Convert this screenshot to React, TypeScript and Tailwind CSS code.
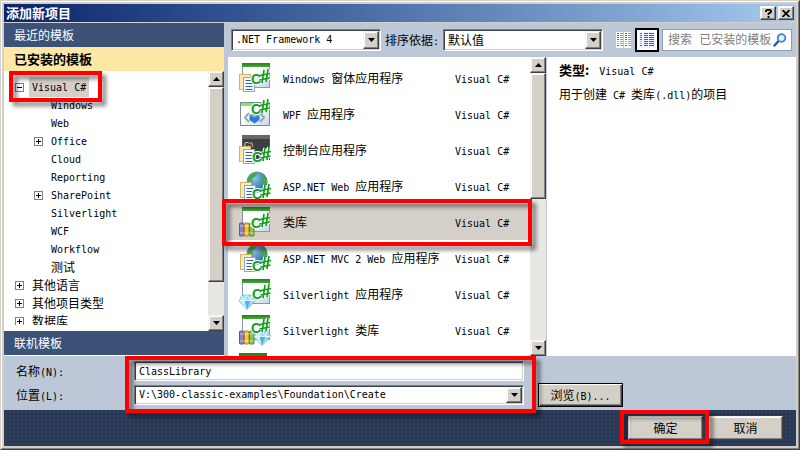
import React from "react";

const CJK = "font-['Noto_Sans_CJK_SC',sans-serif]";
const MONO = "font-['DejaVu_Sans_Mono','Noto_Sans_CJK_SC',monospace]";
const RAISED =
  "border border-t-[#f4f2ee] border-l-[#f4f2ee] border-r-[#404040] border-b-[#404040] bg-[#d4d0c8] shadow-[inset_-1px_-1px_0_#808080,inset_1px_1px_0_#ffffff]";
const SUNKEN =
  "border border-t-[#808080] border-l-[#808080] border-r-white border-b-white shadow-[inset_1px_1px_0_#404040,inset_-1px_-1px_0_#d4d0c8] bg-white";

/* Latin runs are set in the monospaced face, Chinese runs in the CJK face. */
function T({ children }: { children: string }) {
  return (
    <>
      {children.split(/([\x20-\x7e]+)/).map((run, i) =>
        i % 2 ? (
          <span key={i} className={`${MONO} whitespace-pre text-[10px]`}>
            {run}
          </span>
        ) : (
          run
        ),
      )}
    </>
  );
}

function Arrow({ up = false }: { up?: boolean }) {
  return (
    <svg width="7" height="4" viewBox="0 0 7 4" aria-hidden="true">
      <path d={up ? "M0 4 3.5 0 7 4Z" : "M0 0H7L3.5 4Z"} fill="#000" />
    </svg>
  );
}

function Scrollbar({ thumb, label }: { thumb: string; label: string }) {
  return (
    <div className="flex w-4 shrink-0 flex-col bg-[#e9e7e3]">
      <button aria-label={`${label} ↑`} className={`flex h-4 shrink-0 items-center justify-center ${RAISED}`}>
        <Arrow up />
      </button>
      <div className={`${thumb} ${RAISED}`} />
      <button aria-label={`${label} ↓`} className={`mt-auto flex h-4 shrink-0 items-center justify-center ${RAISED}`}>
        <Arrow />
      </button>
    </div>
  );
}

function Combo({ id, options, className, textClass, label }: { id: string; options: string[]; className: string; textClass: string; label?: string }) {
  return (
    <div className={`relative ${className}`}>
      <select id={id} aria-label={label} className={`h-full w-full appearance-none rounded-none pr-5 pl-1 outline-none ${textClass} ${SUNKEN}`}>
        {options.map((o) => (
          <option key={o}>{o}</option>
        ))}
      </select>
      <span className={`pointer-events-none absolute inset-y-0.5 right-0.5 flex w-4 items-center justify-center ${RAISED}`}>
        <Arrow />
      </span>
    </div>
  );
}

type Node = { text: string; level: 1 | 2; sign?: "+" | "-"; selected?: boolean };
const TREE: Node[] = [
  { text: "Visual C#", level: 1, sign: "-", selected: true },
  { text: "Windows", level: 2 },
  { text: "Web", level: 2 },
  { text: "Office", level: 2, sign: "+" },
  { text: "Cloud", level: 2 },
  { text: "Reporting", level: 2 },
  { text: "SharePoint", level: 2, sign: "+" },
  { text: "Silverlight", level: 2 },
  { text: "WCF", level: 2 },
  { text: "Workflow", level: 2 },
  { text: "测试", level: 2 },
  { text: "其他语言", level: 1, sign: "+" },
  { text: "其他项目类型", level: 1, sign: "+" },
  { text: "数据库", level: 1, sign: "+" },
];

function Expander({ sign }: { sign?: "+" | "-" }) {
  return (
    <svg width="9" height="9" viewBox="0 0 9 9" className="shrink-0" shapeRendering="crispEdges" aria-hidden="true">
      {sign && (
        <>
          <rect x=".5" y=".5" width="8" height="8" fill="#fff" stroke="#808080" />
          <path d={sign === "+" ? "M2 4.5H7M4.5 2V7" : "M2 4.5H7"} stroke="#000" />
        </>
      )}
    </svg>
  );
}

type Kind = "form" | "wpf" | "console" | "web" | "lib" | "sl" | "sllib" | "green";

function Sharp({ x, y }: { x: number; y: number }) {
  const bars = "M12 -1 10 12M16 -2 14 11M8 4.500 18 2.500M7.500 9 17.500 7";
  return (
    <g transform={`translate(${x} ${y})`}>
      <path d={bars} stroke="#fff" strokeWidth="3.800" />
      <text
        x="-1"
        y="13"
        fontSize="14"
        fontWeight="bold"
        fontFamily="Liberation Sans, sans-serif"
        fill="#12a018"
        stroke="#fff"
        strokeWidth="2"
        paintOrder="stroke"
      >
        C
      </text>
      <path d={bars} stroke="#12a018" strokeWidth="1.700" />
    </g>
  );
}

function Papers() {
  return (
    <g>
      <rect x=".5" y="12.500" width="11" height="15" fill="#fbe9b0" stroke="#d2b469" />
      <rect x="4.500" y="15.500" width="11" height="14" fill="#f6faff" stroke="#8da6cc" />
      <path d="M6.500 18.500H13.500M6.500 21.500H13.500M6.500 24.500H13.500M6.500 27.500H13.500" stroke="#2f60b8" />
    </g>
  );
}

function Books() {
  return (
    <g>
      <rect x=".5" y="17" width="4.500" height="13" rx="1" fill="#8d83bd" stroke="#62588f" />
      <rect x="5.500" y="17" width="4.500" height="13" rx="1" fill="#f0c64a" stroke="#a97c18" />
      <rect x="10.500" y="17" width="4.500" height="13" rx="1" fill="#8dc053" stroke="#4f842a" />
      <path d="M1 20H14.500M1 27H14.500" stroke="#fff" strokeOpacity=".5" />
    </g>
  );
}

function Gem({ x, y }: { x: number; y: number }) {
  return (
    <g transform={`translate(${x} ${y})`}>
      <path d="M3 1H13L17 6 8 15.500 0 7Z" fill="#9bdcf5" stroke="#6fb9dc" strokeWidth=".8" />
      <path d="M3 1 5.500 6 8 15.500 1 7Z" fill="#cdf0fc" />
      <path d="M5.500 6H11.500L8 15.500Z" fill="#4fb4df" />
      <path d="M.5 6.500H16.500M5.500 6 7.500 1 11.500 6 13 1" stroke="#fff" strokeWidth=".8" fill="none" />
    </g>
  );
}

function Frame({ dark = false }: { dark?: boolean }) {
  return (
    <g>
      <rect x="3.500" y="1.500" width="27" height="24" fill={dark ? "#3c3f42" : "url(#paper)"} stroke={dark ? "#55585b" : "#8798a8"} />
      <rect x="3" y="1" width="28" height="4" fill={dark ? "#65686a" : "url(#bar)"} />
    </g>
  );
}

function TemplateIcon({ kind }: { kind: Kind }) {
  return (
    <svg width="32" height="32" viewBox="0 0 32 32" fill="none" className="shrink-0" aria-hidden="true">
      <defs>
        <linearGradient id="bar" x1="0" y1="0" x2="0" y2="1">
          <stop offset="0" stopColor="#23801d" />
          <stop offset="1" stopColor="#47a838" />
        </linearGradient>
        <linearGradient id="paper" x1="0" y1="0" x2="1" y2="1">
          <stop offset=".4" stopColor="#ffffff" />
          <stop offset="1" stopColor="#c3d4ea" />
        </linearGradient>
        <radialGradient id="globe" cx=".35" cy=".3" r=".8">
          <stop offset="0" stopColor="#8fc8f2" />
          <stop offset="1" stopColor="#1b57a8" />
        </radialGradient>
      </defs>
      {kind === "form" && (
        <>
          <Frame />
          <Papers />
          <Sharp x={13} y={9} />
        </>
      )}
      {kind === "wpf" && (
        <>
          <rect x="1.500" y="4.500" width="29" height="23" fill="url(#paper)" stroke="#7d8a98" />
          <rect x="2" y="5" width="28" height="3" fill="#7cf052" />
          <path d="M10 15 6 19.500 10 24M21 15 25 19.500 21 24" stroke="#9aa5b3" strokeWidth="2" />
          <path d="M10.500 17 15.500 15 20.500 17V22L15.500 25.500 10.500 22Z" fill="#2f7bd3" />
          <path d="M10.500 17 15.500 15 20.500 17 15.500 19.500Z" fill="#77b8f2" />
          <Sharp x={13} y={3} />
        </>
      )}
      {kind === "console" && (
        <>
          <Frame dark />
          <text x="5" y="13" fontSize="7" fontFamily="Liberation Sans, sans-serif" fill="#fff">
            C:\
          </text>
          <Papers />
          <Sharp x={14} y={15} />
        </>
      )}
      {kind === "web" && (
        <>
          <circle cx="18" cy="12" r="10.500" fill="url(#globe)" />
          <path d="M10 6C13 3 15 2 19 2L17 6 13 9 14 14 10 13 8 10ZM21 3 27 8 28.500 13 24 16 21 11 23 8ZM15 16 19 18 18 22 14 20Z" fill="#49a851" />
          <g transform="translate(1 0)">
            <Papers />
          </g>
          <Sharp x={14} y={16} />
        </>
      )}
      {kind === "lib" && (
        <>
          <Frame />
          <Books />
          <Sharp x={13} y={9} />
        </>
      )}
      {kind === "sl" && (
        <>
          <Frame />
          <Gem x={0} y={16} />
          <Sharp x={14} y={8} />
        </>
      )}
      {kind === "sllib" && (
        <>
          <Frame />
          <Books />
          <Gem x={15} y={16} />
          <Sharp x={13} y={6} />
        </>
      )}
      {kind === "green" && <rect x="0" y="3" width="28" height="16" fill="url(#bar)" />}
    </svg>
  );
}

const TEMPLATES: { name: string; kind: Kind; selected?: boolean }[] = [
  { name: "Windows 窗体应用程序", kind: "form" },
  { name: "WPF 应用程序", kind: "wpf" },
  { name: "控制台应用程序", kind: "console" },
  { name: "ASP.NET Web 应用程序", kind: "web" },
  { name: "类库", kind: "lib", selected: true },
  { name: "ASP.NET MVC 2 Web 应用程序", kind: "web" },
  { name: "Silverlight 应用程序", kind: "sl" },
  { name: "Silverlight 类库", kind: "sllib" },
];

const DASHES = ["#2f9e4a", "#ff2a1a", "#3a62e4", "#ff2a1a", "#c8d820", "#f0b429", "#ff2a1a"];

function SmallIconsView() {
  return (
    <svg width="15" height="16" viewBox="0 0 15 16" aria-hidden="true" shapeRendering="crispEdges">
      <rect width="7" height="16" fill="#ffffff" />
      <rect x="8" width="7" height="16" fill="#ffffff" />
      {DASHES.map((c, i) => (
        <g key={i}>
          <rect x="1" y={1 + i * 2} width="2" height="1" fill={c} />
          <rect x="4" y={1 + i * 2} width="3" height="1" fill="#8fa0bd" />
          <rect x="9" y={1 + i * 2} width="2" height="1" fill={c} />
          <rect x="12" y={1 + i * 2} width="3" height="1" fill="#8fa0bd" />
        </g>
      ))}
    </svg>
  );
}

function MediumIconsView() {
  return (
    <svg width="16" height="16" viewBox="0 0 16 16" aria-hidden="true" shapeRendering="crispEdges">
      <rect width="16" height="16" fill="#eef3ff" />
      {DASHES.map((c, i) => (
        <g key={i}>
          <rect x="1" y={1 + i * 2} width="2" height="1" fill={c} />
          <rect x="5" y={1 + i * 2} width="4" height="1" fill="#2f55e6" />
          <rect x="10" y={1 + i * 2} width="5" height="1" fill="#2f55e6" />
        </g>
      ))}
    </svg>
  );
}

function Highlight({ className }: { className: string }) {
  return (
    <div
      aria-hidden="true"
      className={`pointer-events-none absolute z-10 border-4 border-[#ff0000] drop-shadow-[4px_4px_2px_rgba(0,0,0,0.5)] ${className}`}
    />
  );
}

export default function App() {
  return (
    <div className={`relative h-screen w-full overflow-hidden border border-t-[#d4d0c8] border-r-[#404040] border-b-[#404040] border-l-[#d4d0c8] text-xs text-black ${CJK}`}>
      <div className="flex h-full flex-col border border-t-white border-r-[#808080] border-b-[#808080] border-l-white">
        <div className="flex min-h-0 flex-1 flex-col border-2 border-[#d4d0c8]">
          <header className="flex h-[19px] shrink-0 items-center gap-0.5 border-b border-[#d4d0c8] bg-linear-to-r from-[#0a246a] to-[#a6caf0] pr-0.5 pl-0.5">
            <h1 className="flex-1 text-[13px] leading-4 font-bold text-white">添加新项目</h1>
            <button aria-label="帮助" className={`flex h-3.5 w-4 items-center justify-center ${RAISED}`}>
              <svg width="7" height="9" viewBox="0 0 7 9" fill="none" aria-hidden="true">
                <path d="M1 3V1.800L2 .9H5L6 1.800V3L3.500 4.800V6M3.500 7V9" stroke="#000" strokeWidth="1.800" />
              </svg>
            </button>
            <button aria-label="关闭" className={`flex h-3.5 w-4 items-center justify-center ${RAISED}`}>
              <svg width="8" height="7" viewBox="0 0 8 7" fill="none" aria-hidden="true">
                <path d="M.5 0 7.500 7M7.500 0 .5 7" stroke="#000" strokeWidth="1.700" />
              </svg>
            </button>
          </header>

          <main className="flex min-h-0 flex-1 bg-[#bcc7d8]">
            <nav className="mr-1 flex w-[220px] shrink-0 flex-col border-b border-white bg-white">
              <button className="flex h-6 shrink-0 items-center bg-[#3d5277] pl-2.5 text-white">最近的模板</button>
              <h2 className="flex h-6 shrink-0 items-center bg-[#ffe8a6] pl-2.5 text-[13px] font-bold">已安装的模板</h2>
              <div className="flex min-h-0 flex-1">
                <ul className="mb-1.5 min-w-0 flex-1 overflow-hidden pt-[7px]">
                  {TREE.map((n) => (
                    <li key={n.text} className={`flex h-[18px] items-center gap-[5px] leading-[18px] ${n.level === 1 ? "pl-[11px]" : "pl-[30px]"}`}>
                      <Expander sign={n.sign} />
                      <span className={`px-[3px] ${n.selected ? "bg-[#d4d0c8]" : ""}`}>
                        <T>{n.text}</T>
                      </span>
                    </li>
                  ))}
                </ul>
                <Scrollbar label="模板树" thumb="h-3/4" />
              </div>
              <button className="flex h-6 shrink-0 items-center bg-[#3d5277] pl-2.5 text-white">联机模板</button>
            </nav>

            <div className="flex min-w-0 flex-1 flex-col">
              <div className="flex h-[34px] shrink-0 items-center pr-1 pl-[3px]">
                <Combo id="framework" label="框架" options={[".NET Framework 4"]} className="h-[22px] w-[150px]" textClass={`text-[10px] ${MONO}`} />
                <label htmlFor="sort" className="ml-1 w-[58px] whitespace-nowrap">
                  <T>排序依据:</T>
                </label>
                <Combo id="sort" options={["默认值"]} className="h-[22px] w-[160px]" textClass="text-xs" />
                <button aria-label="小图标" className="ml-2 flex h-6 w-6 items-center justify-center">
                  <SmallIconsView />
                </button>
                <button aria-label="中等图标" className="flex h-6 w-6 items-center justify-center border-2 border-black bg-white">
                  <MediumIconsView />
                </button>
                <div className="ml-[3px] flex h-[22px] min-w-0 flex-1 items-center border border-[#8e9bbc] bg-white pr-1 pl-[5px]">
                  <input aria-label="搜索" placeholder="搜索 已安装的模板" className={`h-full min-w-0 flex-1 outline-none placeholder:text-[#808080] ${MONO}`} />
                  <svg width="14" height="14" viewBox="0 0 14 14" fill="none" className="shrink-0" aria-hidden="true">
                    <path d="M5.500 8 1.500 12.500" stroke="#2458a8" strokeWidth="2.500" strokeLinecap="round" />
                    <circle cx="8.500" cy="5" r="3.800" fill="#e4f1fc" stroke="#3f84cf" strokeWidth="1.800" />
                  </svg>
                </div>
              </div>

              <div className="flex min-h-0 flex-1">
                <div className="flex w-[318px] shrink-0 bg-white">
                  <ul className="min-w-0 flex-1 overflow-hidden pt-[3px]">
                    {TEMPLATES.map((t) => (
                      <li key={t.name} className={`flex h-9 items-center pl-[11px] ${t.selected ? "bg-[#d4d0c8]" : ""}`}>
                        <TemplateIcon kind={t.kind} />
                        <span className="ml-3 w-[172px] whitespace-nowrap">
                          <T>{t.name}</T>
                        </span>
                        <span className="whitespace-nowrap">
                          <T>Visual C#</T>
                        </span>
                      </li>
                    ))}
                    <li className="flex h-9 items-center pl-[11px]">
                      <TemplateIcon kind="green" />
                    </li>
                  </ul>
                  <Scrollbar label="模板列表" thumb="h-[42%]" />
                </div>
                <section className="ml-px min-w-0 flex-1 bg-white px-3 pt-1">
                  <p className="leading-[18px]">
                    <strong className="text-[13px]">类型:</strong>
                    <span className="ml-2.5">
                      <T>Visual C#</T>
                    </span>
                  </p>
                  <p className="mt-1 leading-[18px]">
                    <T>用于创建 C# 类库(.dll)的项目</T>
                  </p>
                </section>
              </div>
            </div>
          </main>

          <form className="flex shrink-0 bg-[#bcc7d8] pl-3" onSubmit={(e) => e.preventDefault()}>
            <div className="grid grid-cols-[118px_390px] items-center gap-y-1 py-[5px]">
              <label htmlFor="name">
                <T>名称(N):</T>
              </label>
              <input id="name" defaultValue="ClassLibrary" className={`h-5 w-full pl-1 text-[10px] outline-none ${MONO} ${SUNKEN}`} />
              <label htmlFor="location">
                <T>位置(L):</T>
              </label>
              <Combo id="location" options={["V:\\300-classic-examples\\Foundation\\Create"]} className="h-5 w-full" textClass={`text-[10px] ${MONO}`} />
            </div>
            <button type="button" className="mb-[3px] ml-3.5 h-6 w-[85px] self-end border border-black bg-[#d4d0c8] shadow-[inset_1px_1px_0_#ffffff,inset_-1px_-1px_0_#404040,inset_-2px_-2px_0_#808080]">
              <T>浏览(B)...</T>
            </button>
          </form>

          <footer className="flex h-9 shrink-0 items-center justify-end gap-[5px] bg-[#293955] bg-[radial-gradient(#30425f_1px,transparent_1px)] bg-[size:4px_4px] pr-[13px]">
            <button className={`h-6 w-[75px] ${RAISED}`}>确定</button>
            <button className={`h-6 w-[75px] ${RAISED}`}>取消</button>
          </footer>
        </div>
      </div>

      <Highlight className="top-[70px] left-2 h-[31px] w-[93px]" />
      <Highlight className="top-[198px] left-[221px] h-[47px] w-[310px]" />
      <Highlight className="bottom-9 left-[124px] h-[57px] w-[411px]" />
      <Highlight className="right-[90px] bottom-[5px] h-[34px] w-[89px]" />
    </div>
  );
}
